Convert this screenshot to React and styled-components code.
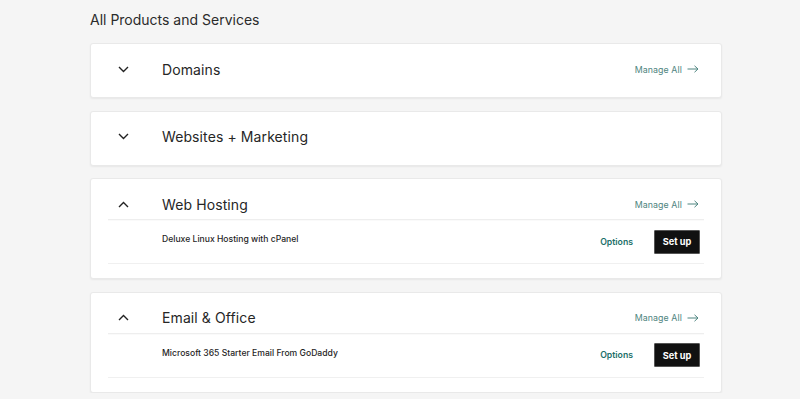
import React from "react";
import styled, { createGlobalStyle } from "styled-components";

const GlobalStyle = createGlobalStyle`
  html, body {
    margin: 0;
    padding: 0;
    background: #f5f5f5;
    font-family: Inter, "Open Sans", Arial, sans-serif;
    color: #1f1f1f;
  }
`;

const Page = styled.main`
  width: 632px;
  margin: 0 0 0 90px;
  padding: 10px 0 0 0;
  display: flex;
  flex-direction: column;
  gap: 12.5px;
`;

const Heading = styled.h2`
  margin: 0 0 0.5px 0;
  font-size: 14px;
  font-weight: 400;
  line-height: 20px;
  color: #2b2b2b;
`;

const Card = styled.section`
  background: #fff;
  border: 1px solid #e9e9e9;
  border-radius: 3px;
  box-shadow: 0 1px 2px rgba(0, 0, 0, 0.06);
  padding: 0 17px ${(p) => (p.$open ? "14px" : "0")} 17px;
`;

const Header = styled.div`
  display: flex;
  align-items: center;
  height: 20px;
  padding: 15px 0 ${(p) => (p.$open ? "5px" : "18px")} 0;
  border-bottom: ${(p) => (p.$open ? "1px solid #eeeeee" : "none")};
  box-shadow: ${(p) => (p.$open ? "0 1px 1px rgba(0,0,0,0.02)" : "none")};
`;

const Toggle = styled.span`
  width: 54px;
  flex: none;
  display: flex;
  align-items: center;
  padding-left: 10px;
  box-sizing: border-box;
  color: #222;
`;

const Title = styled.h3`
  margin: 0;
  flex: 1;
  font-size: 14px;
  font-weight: 400;
  color: #262626;
  letter-spacing: 0.1px;
`;

const ManageLink = styled.a`
  display: flex;
  align-items: center;
  gap: 5px;
  margin-right: 5px;
  font-size: 8.8px;
  color: #4f8580;
  text-decoration: none;
  letter-spacing: 0.1px;
`;

const ProductRow = styled.div`
  display: flex;
  align-items: center;
  height: 43px;
  padding: 0 4px 0 54px;
  border-bottom: 1px solid #f0f0f0;
`;

const ProductName = styled.span`
  flex: 1;
  font-size: 8.6px;
  font-weight: 500;
  color: #1f1f1f;
  margin-top: -5px;
`;

const OptionsLink = styled.a`
  font-size: 8.7px;
  font-weight: 600;
  color: #1b6f69;
  margin-right: 21px;
  text-decoration: none;
`;

const SetupButton = styled.button`
  width: 46px;
  height: 24px;
  padding: 0;
  background: #111;
  color: #fff;
  border: 1px solid #555;
  border-radius: 1px;
  font-family: inherit;
  font-size: 9.2px;
  font-weight: 700;
`;

const Chevron = ({ up }) => (
  <svg width="11" height="7" viewBox="0 0 11 7" fill="none">
    <path
      d={up ? "M1 6L5.5 1.5L10 6" : "M1 1L5.5 5.5L10 1"}
      stroke="currentColor"
      strokeWidth="1.4"
    />
  </svg>
);

const Arrow = () => (
  <svg width="12" height="8" viewBox="0 0 12 8" fill="none">
    <path d="M0.5 4H11M7.5 0.8L11 4L7.5 7.2" stroke="currentColor" strokeWidth="1" />
  </svg>
);

const sections = [
  { title: "Domains", manage: true, open: false },
  { title: "Websites + Marketing", manage: false, open: false },
  { title: "Web Hosting", manage: true, open: true, product: "Deluxe Linux Hosting with cPanel" },
  { title: "Email & Office", manage: true, open: true, product: "Microsoft 365 Starter Email From GoDaddy" },
];

const App = () => (
  <>
    <GlobalStyle />
    <Page>
      <Heading>All Products and Services</Heading>
      {sections.map((s) => (
        <Card key={s.title} $open={s.open}>
          <Header $open={s.open}>
            <Toggle>
              <Chevron up={s.open} />
            </Toggle>
            <Title>{s.title}</Title>
            {s.manage && (
              <ManageLink href="#">
                Manage All <Arrow />
              </ManageLink>
            )}
          </Header>
          {s.open && (
            <ProductRow>
              <ProductName>{s.product}</ProductName>
              <OptionsLink href="#">Options</OptionsLink>
              <SetupButton>Set up</SetupButton>
            </ProductRow>
          )}
        </Card>
      ))}
    </Page>
  </>
);

export default App;
